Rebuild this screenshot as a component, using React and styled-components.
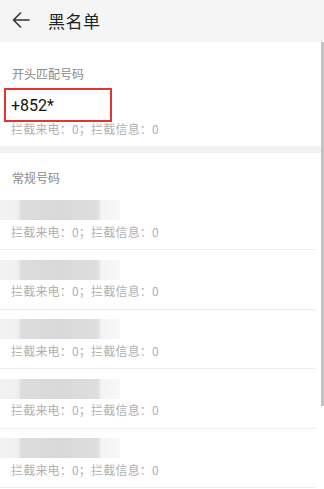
import React from "react";
import styled, { createGlobalStyle } from "styled-components";

const Global = createGlobalStyle`
  html, body { margin: 0; padding: 0; background: #fff; }
  body { font-family: "Noto Sans CJK SC", "Noto Sans", Roboto, sans-serif; }
  * { box-sizing: border-box; }
`;

const Page = styled.div`
  position: relative;
  width: 324px;
  height: 489px;
  overflow: hidden;
  background: #fff;
`;

const Header = styled.div`
  height: 42px;
  background: #f5f5f5;
  display: flex;
  align-items: center;
  padding-left: 12px;
`;

const Back = styled.svg`
  width: 18px;
  height: 16px;
  margin-right: 18px;
  margin-top: -2px;
`;

const Title = styled.div`
  font-size: 17px;
  color: #222;
  letter-spacing: 0.5px;
  margin-top: -2px;
`;

const Section = styled.div`
  padding: 23px 0 0 0;
`;

const Label = styled.div`
  font-size: 12px;
  line-height: 17px;
  color: #8a8a8a;
  padding-left: 12px;
`;

const Highlight = styled.div`
  margin: 6px 0 0 4px;
  width: 108px;
  height: 34px;
  border: 2px solid #e5342f;
  display: flex;
  align-items: flex-end;
  padding: 0 0 5px 5px;
  font-family: Roboto, "Noto Sans", sans-serif;
  font-size: 16px;
  color: #111;
`;

const Stats = styled.div`
  font-size: 12px;
  line-height: 17px;
  color: #b0b0b0;
  padding-left: ${(p) => p.$pad || 0}px;
  margin-top: ${(p) => p.$shift || 0}px;
  letter-spacing: 0.2px;
`;

const Band = styled.div`
  height: 7px;
  background: #f1f1f1;
  margin-top: 9px;
`;

const Section2 = styled.div`
  padding-top: 16px;
`;

const List = styled.div`
  margin-top: 4.5px;
`;

const Row = styled.div`
  margin-right: 9px;
  padding: 9.5px 0 9.5px 11px;
  border-bottom: 1px solid #ececec;
`;

const Blur = styled.div`
  margin-left: -11px;
  width: 120px;
  height: 20px;
  margin-bottom: 2.5px;
  filter: blur(0.6px);
  background: linear-gradient(
    to right,
    #f2f2f2 0px,
    #f0f0f0 18px,
    #dcdcdc 21px,
    #d9d9d9 60px,
    #dedede 98px,
    #f3f3f3 101px,
    #f8f8f8 120px
  );
`;

const Scrollbar = styled.div`
  position: absolute;
  right: 0;
  top: 42px;
  width: 3px;
  height: 364px;
  background: #c2c2c2;
`;

const STATS = "拦截来电：0；拦截信息：0";

export default function App() {
  return (
    <Page>
      <Global />
      <Header>
        <Back viewBox="0 0 18 16" fill="none">
          <path d="M17 8H1.5M8.5 1L1.5 8l7 7" stroke="#333" strokeWidth="1.6" strokeLinecap="round" strokeLinejoin="round" />
        </Back>
        <Title>黑名单</Title>
      </Header>
      <Section>
        <Label>开头匹配号码</Label>
        <Highlight>+852*</Highlight>
        <Stats $pad={11} $shift={-2}>{STATS}</Stats>
        <Band />
      </Section>
      <Section2>
        <Label>常规号码</Label>
        <List>
          {[0, 1, 2, 3, 4].map((i) => (
            <Row key={i}>
              <Blur />
              <Stats>{STATS}</Stats>
            </Row>
          ))}
        </List>
      </Section2>
      <Scrollbar />
    </Page>
  );
}
